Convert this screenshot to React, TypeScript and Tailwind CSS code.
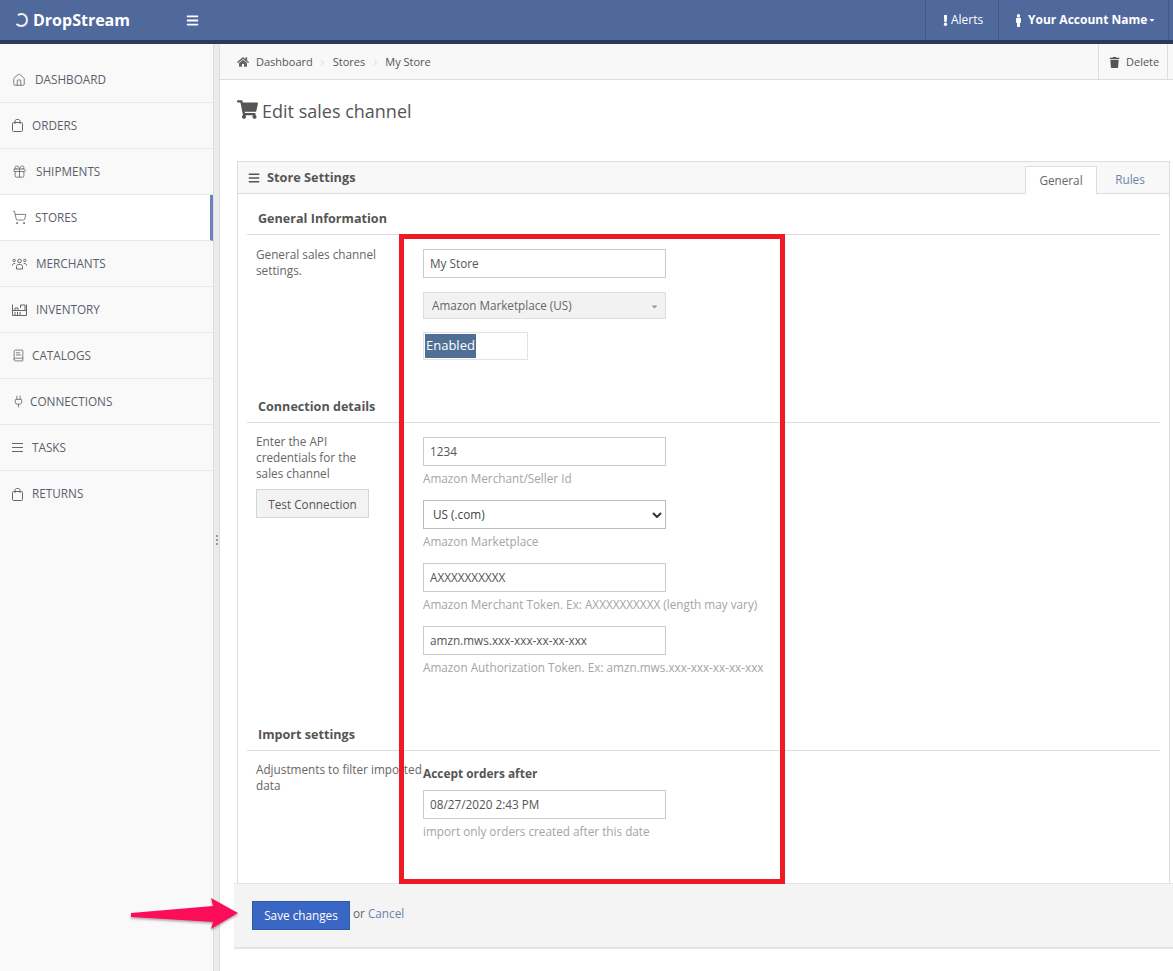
import { Home, Gift, ShoppingCart, BookText, Plug, ChevronRight } from 'lucide-react';
import { FaHome, FaShoppingCart, FaTrash, FaBars, FaExclamation, FaMale, FaCaretDown } from 'react-icons/fa';

const BagIcon = () => (
    <svg width="11" height="13" viewBox="0 0 11 13" fill="none" stroke="currentColor" strokeWidth="1">
        <rect x=".5" y="3.5" width="10" height="9" rx="1" />
        <path d="M3 5V2.2C3 1.2 3.8.5 4.6.5h1.8C7.2.5 8 1.2 8 2.2V5" />
    </svg>
);

const MerchantsIcon = () => (
    <svg width="15" height="12" viewBox="0 0 15 12" fill="none" stroke="currentColor" strokeWidth="1">
        <circle cx="7.5" cy="3" r="1.8" />
        <path d="M4.5 11V8.5c0-1.2 1-2 2-2h2c1 0 2 .8 2 2V11z" />
        <circle cx="2.2" cy="2.5" r="1.2" />
        <path d="M.5 7.5c0-1.2.6-2 1.7-2h1" />
        <circle cx="12.8" cy="2.5" r="1.2" />
        <path d="M14.5 7.5c0-1.2-.6-2-1.7-2h-1" />
    </svg>
);

const InventoryIcon = () => (
    <svg width="15" height="12" viewBox="0 0 15 12" fill="none" stroke="currentColor" strokeWidth="1">
        <path d="M.5 .5V11.5H14.5V.5" />
        <path d="M.5 6.5H14.5" />
        <path d="M3 11V8M5.5 11V8M8 11V8" />
        <path d="M8.5 4V1H13V6" />
        <path d="M3 6V4H6V6" />
    </svg>
);

const TasksIcon = () => (
    <svg width="11" height="9" viewBox="0 0 11 9" fill="none" stroke="currentColor" strokeWidth="1">
        <path d="M0 .5H11M0 4.5H11M0 8.5H11" />
    </svg>
);

const navItems = [
    { label: 'DASHBOARD', icon: <Home size={14} strokeWidth={1.4} />, gap: 'w-[23px]' },
    { label: 'ORDERS', icon: <BagIcon />, gap: 'w-[20px]' },
    { label: 'SHIPMENTS', icon: <Gift size={15} strokeWidth={1.3} />, gap: 'w-[24px]' },
    { label: 'STORES', icon: <ShoppingCart size={15} strokeWidth={1.3} />, gap: 'w-[23px]', active: true },
    { label: 'MERCHANTS', icon: <MerchantsIcon />, gap: 'w-[24px]' },
    { label: 'INVENTORY', icon: <InventoryIcon />, gap: 'w-[24px]' },
    { label: 'CATALOGS', icon: <BookText size={13} strokeWidth={1.5} />, gap: 'w-[20px]' },
    { label: 'CONNECTIONS', icon: <Plug size={13} strokeWidth={1.5} className="rotate-[0deg]" />, gap: 'w-[18px]' },
    { label: 'TASKS', icon: <TasksIcon />, gap: 'w-[20px]' },
    { label: 'RETURNS', icon: <BagIcon />, gap: 'w-[20px]' },
];

const Sidebar = () => (
    <aside className="w-[213px] shrink-0 bg-[#f9f9f9] pt-[13px]">
        {navItems.map((item) => (
            <div
                key={item.label}
                className={`h-[46px] pl-[12px] flex items-center border-b border-[#e8e8e8] text-[11.75px] text-[#5a5f6b] ${item.active ? 'bg-white border-r-[3px] border-r-[#6a82b8]' : ''} ${item.label === 'RETURNS' ? 'border-b-0' : ''}`}
            >
                <span className={`${item.gap} shrink-0 flex items-center text-[#666]`}>{item.icon}</span>
                <span>{item.label}</span>
            </div>
        ))}
    </aside>
);

const Divider = () => (
    <div className="w-[7px] shrink-0 bg-[#ebebeb] border-x border-[#dcdcdc] flex flex-col items-center pt-[491px] gap-[2px]">
        <span className="w-[2px] h-[2px] bg-[#999]" />
        <span className="w-[2px] h-[2px] bg-[#999]" />
        <span className="w-[2px] h-[2px] bg-[#999]" />
    </div>
);

const Header = () => (
    <header className="h-[44px] shrink-0 bg-[#50699c] border-b-[4px] border-[#2c3a5a] flex text-white">
        <div className="w-[213px] flex items-center pl-[15px]">
            <svg width="13" height="14" viewBox="0 0 13 14" fill="none" stroke="#f2f2f2" strokeWidth="2">
                <path d="M3 2.2C4 1.4 5.3 1 6.5 1 9.6 1 12 3.6 12 7s-2.4 6-5.5 6C4.8 13 3 12.4 1.5 11" />
            </svg>
            <span className="ml-[5px] text-[16px] font-bold">DropStream</span>
            <FaBars className="ml-[56px]" size={13} />
        </div>
        <div className="flex-1" />
        <div className="w-[74px] border-x border-[#435a88] flex items-center pl-[14px] text-[12px]">
            <FaExclamation size={11} />
            <span>Alerts</span>
        </div>
        <div className="w-[170px] border-r border-[#435a88] flex items-center pl-[13px] text-[12px] font-bold">
            <FaMale size={13} />
            <span className="ml-[3px]">Your Account Name</span>
            <FaCaretDown size={8} className="ml-[1px]" />
        </div>
        <div className="w-[4px]" />
    </header>
);

const Crumbs = () => (
    <div className="h-[36px] shrink-0 bg-[#f8f8f8] border-b border-[#dddddd] flex items-center pl-[17px] text-[11px] text-[#555]">
        <FaHome size={12} className="text-[#666] mt-px" />
        <span className="ml-[7px] mt-px">Dashboard</span>
        <ChevronRight size={9} strokeWidth={1.5} className="mx-[5.5px] text-[#bbb] mt-px" />
        <span className="mt-px">Stores</span>
        <ChevronRight size={9} strokeWidth={1.5} className="mx-[5.5px] text-[#bbb] mt-px" />
        <span className="mt-px">My Store</span>
        <div className="ml-auto mr-[5px] w-[70px] h-full border-x border-[#dddddd] flex items-center pl-[10px]">
            <FaTrash size={11} className="text-[#555] mt-px" />
            <span className="ml-[6px] mt-px">Delete</span>
        </div>
    </div>
);

const SectionTitle = ({ children, className = '' }: { children: string; className?: string }) => (
    <div className={`h-[31px] border-b border-[#dddddd] pl-[11px] flex items-center text-[12.6px] font-bold text-[#555] ${className}`}>{children}</div>
);

const TextInput = ({ value, className = '' }: { value: string; className?: string }) => (
    <div className={`w-[243px] h-[29px] border border-[#cccccc] bg-white pl-[6px] pt-px flex items-center text-[11.75px] text-[#555] ${className}`}>{value}</div>
);

const Help = ({ children, className = '' }: { children: string; className?: string }) => (
    <div className={`h-[24px] pt-[2px] flex items-center text-[11.75px] text-[#a5a5a5] whitespace-nowrap ${className}`}>{children}</div>
);

const Row = ({ left, children }: { left: React.ReactNode; children: React.ReactNode }) => (
    <div className="flex">
        <div className="w-[176px] pl-[9px] text-[11.75px] leading-[16px] text-[#666] shrink-0">{left}</div>
        <div>{children}</div>
    </div>
);

const Panel = () => (
    <section className="ml-[17px] mr-[3px] border-x border-t border-[#dddddd] flex-1 flex flex-col">
        <div className="h-[32px] shrink-0 bg-[#f8f8f8] border-b border-[#dddddd] flex items-center pl-[10px] text-[#555]">
            <FaBars size={12} />
            <span className="ml-[7px] text-[12.75px] font-bold">Store Settings</span>
            <div className="ml-auto self-end flex h-[28px] text-[11.75px] mb-[-1px]">
                <div className="w-[72px] bg-white border border-b-0 border-[#dddddd] flex items-center justify-center text-[#666]">General</div>
                <div className="w-[72px] flex items-center justify-center text-[#6b84a8] pr-[6px]">Rules</div>
            </div>
        </div>
        <div className="px-[9px]">
            <SectionTitle className="mt-[10px]">General Information</SectionTitle>
            <Row left={<div className="pt-[11px]">General sales channel settings.</div>}>
                <TextInput value="My Store" className="mt-[14px] h-[28px]" />
                <div className="w-[243px] h-[27px] mt-[14px] bg-[#f2f2f2] border border-[#dddddd] pl-[8px] pr-[6px] pt-px flex items-center justify-between text-[11.7px] text-[#666]">
                    <span>Amazon Marketplace (US)</span>
                    <FaCaretDown size={9} className="text-[#999]" />
                </div>
                <div className="w-[105px] h-[28px] mt-[13px] border border-[#e2e2e2] p-px">
                    <div className="w-[51px] h-full bg-[#4f7094] text-white text-[13px] flex items-center pl-[1px]">Enabled</div>
                </div>
            </Row>
            <SectionTitle className="mt-[32px]">Connection details</SectionTitle>
            <Row
                left={
                    <div className="pt-[10px]">
                        <div className="w-[112px]">Enter the API credentials for the sales channel</div>
                        <div className="mt-[8px] w-[113px] h-[29px] bg-[#f3f3f3] border border-[#d5d5d5] flex items-center justify-center text-[#555]">Test Connection</div>
                    </div>
                }
            >
                <TextInput value="1234" className="mt-[14px]" />
                <Help>Amazon Merchant/Seller Id</Help>
                <div className="w-[243px] h-[29px] mt-[10px] border border-[#bbbbbb] bg-white pl-[9px] pr-[3px] flex items-center justify-between text-[11.75px] text-[#444]">
                    <span>US (.com)</span>
                    <svg width="10" height="6" viewBox="0 0 10 6" fill="none" stroke="#333" strokeWidth="2">
                        <path d="M1 1l4 4 4-4" />
                    </svg>
                </div>
                <Help>Amazon Marketplace</Help>
                <TextInput value="AXXXXXXXXXX" className="mt-[10px]" />
                <Help>Amazon Merchant Token. Ex: AXXXXXXXXXX (length may vary)</Help>
                <TextInput value="amzn.mws.xxx-xxx-xx-xx-xxx" className="mt-[10px]" />
                <Help>Amazon Authorization Token. Ex: amzn.mws.xxx-xxx-xx-xx-xxx</Help>
            </Row>
            <SectionTitle className="mt-[41px]">Import settings</SectionTitle>
            <Row left={<div className="pt-[10px]">Adjustments to filter imported data</div>}>
                <div className="mt-[15px] h-[16px] flex items-center text-[11.9px] font-bold text-[#555]">Accept orders after</div>
                <TextInput value="08/27/2020 2:43 PM" className="mt-[8px]" />
                <Help>import only orders created after this date</Help>
            </Row>
        </div>
    </section>
);

const Footer = () => (
    <div className="h-[66px] ml-[-3px] shrink-0 bg-[#f4f4f4] border-t border-b-2 border-[#e4e4e4] pl-[18px] pt-[17px] flex items-start mb-[22px] relative z-10">
        <div className="w-[98px] h-[29px] bg-[#3a67c4] border border-[#2f5aa8] text-white text-[11.75px] flex items-center justify-center">Save changes</div>
        <span className="ml-[3px] mt-[4px] text-[11.75px] text-[#666]">or <span className="text-[#6b84a8]">Cancel</span></span>
    </div>
);

export default function App() {
    return (
        <div className="relative h-[971px] w-[1173px] overflow-hidden bg-white flex flex-col font-['Open_Sans',sans-serif]">
            <Header />
            <div className="flex-1 flex min-h-0">
                <Sidebar />
                <Divider />
                <main className="flex-1 flex flex-col min-w-0">
                    <Crumbs />
                    <h1 className="pl-[17px] h-[81px] shrink-0 flex items-start pt-[19px] text-[18px] leading-[24px] text-[#555]">
                        <FaShoppingCart size={21} className="text-[#555] mr-[4px]" />
                        Edit sales channel
                    </h1>
                    <Panel />
                    <div className="pl-[17px]">
                        <Footer />
                    </div>
                </main>
            </div>
            <div className="absolute left-[399px] top-[234px] w-[386px] h-[650px] border-[5px] border-[#ed1c24] pointer-events-none z-20" />
            <svg className="absolute left-[128px] top-[895px] z-20" width="112" height="38" viewBox="0 0 112 38">
                <defs>
                    <filter id="s" x="-10%" y="-20%" width="120%" height="150%">
                        <feDropShadow dx="0" dy="1.5" stdDeviation="1.2" floodColor="#000" floodOpacity="0.35" />
                    </filter>
                </defs>
                <path d="M3 18 L85 11 L83 3 L110 18 L83 34 L85 27 L3 22 Z" fill="#fb0f5a" filter="url(#s)" />
            </svg>
        </div>
    );
}
